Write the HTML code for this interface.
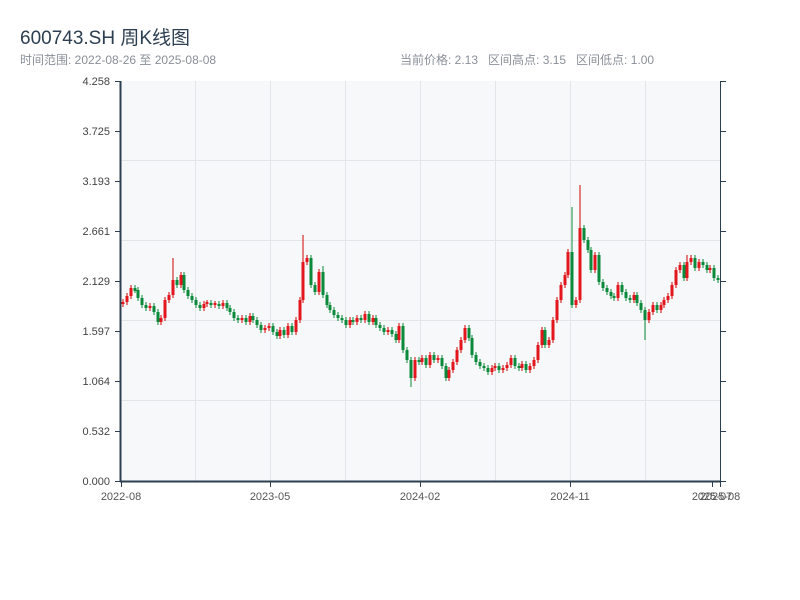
<!DOCTYPE html>
<html><head><meta charset="utf-8">
<style>
body{margin:0;width:800px;height:600px;background:#fff;overflow:hidden;font-family:"Liberation Sans","Noto Sans CJK SC",sans-serif;}
.t{position:absolute;left:20px;top:23px;font-size:19px;color:#2c3e50;}
.s{position:absolute;left:20px;top:51px;font-size:12px;color:#8a8f99;}
.r{position:absolute;left:400px;top:51px;font-size:12px;color:#8a8f99;}
svg{position:absolute;left:0;top:0;}
</style></head><body>
<div class="t">600743.SH 周K线图</div>
<div class="s">时间范围: 2022-08-26 至 2025-08-08</div>
<div class="r">当前价格: 2.13&nbsp;&nbsp; 区间高点: 3.15&nbsp;&nbsp; 区间低点: 1.00</div>
<svg width="800" height="600" xmlns="http://www.w3.org/2000/svg" font-family="Liberation Sans, sans-serif" font-size="11">
<rect x="121" y="81" width="599" height="400" fill="#f6f8fa"/>
<g stroke="#e2e5ea" stroke-width="1">
<line x1="195.5" y1="81" x2="195.5" y2="481"/><line x1="270.5" y1="81" x2="270.5" y2="481"/>
<line x1="345.5" y1="81" x2="345.5" y2="481"/><line x1="420.5" y1="81" x2="420.5" y2="481"/>
<line x1="495.5" y1="81" x2="495.5" y2="481"/><line x1="570.5" y1="81" x2="570.5" y2="481"/>
<line x1="645.5" y1="81" x2="645.5" y2="481"/>
<line x1="121" y1="160.5" x2="720" y2="160.5"/><line x1="121" y1="240.5" x2="720" y2="240.5"/>
<line x1="121" y1="320.5" x2="720" y2="320.5"/><line x1="121" y1="400.5" x2="720" y2="400.5"/>
</g>
<path fill="none" stroke="#d40000" stroke-width="1" d="M123 299V307M127 293V305M131 285V299M150 303V311M161 315V325M165 297V321M169 292V303M173 258V298M181 272V288M204 301V311M207 300V307M215 301V308M223 300V309M242 315V323M250 313V325M265 325V333M269 323V331M280 327V339M288 323V338M296 317V335M300 297V323M303 235V303M307 255V265M319 269V295M350 317V328M357 315V325M365 311V323M373 315V325M388 327V335M399 323V343M415 357V381M422 355V365M430 352V368M438 355V363M449 367V381M453 359V373M457 347V365M461 337V353M465 325V343M492 365V375M495 363V371M503 365V373M507 362V371M511 355V368M522 361V371M530 363V373M534 357V369M538 342V363M542 327V348M549 337V348M553 317V343M557 297V323M561 282V303M565 272V288M568 249V278M576 297V308M580 185V303M595 252V273M618 282V301M634 292V303M649 309V323M653 302V315M661 302V313M664 297V308M668 293V303M672 282V299M676 267V288M680 262V273M687 255V281M691 255V265M699 259V271M710 265V273"/>
<path fill="none" stroke="#e3161d" stroke-width="3" d="M123 304V302M127 302V296M131 296V288M150 308V306M161 322V318M165 318V300M169 300V295M173 295V280M181 285V275M204 308V304M207 304V302M215 305V303M223 306V303M242 320V318M250 322V316M265 330V328M269 328V326M280 336V330M288 335V326M296 332V320M300 320V300M303 300V262M307 262V258M319 292V272M350 325V320M357 322V318M365 320V314M373 322V318M388 332V330M399 340V326M415 378V360M422 362V358M430 365V355M438 360V358M449 378V370M453 370V362M457 362V350M461 350V340M465 340V328M492 372V368M495 368V366M503 370V368M507 368V365M511 365V358M522 368V364M530 370V366M534 366V360M538 360V345M542 345V330M549 345V340M553 340V320M557 320V300M561 300V285M565 285V275M568 275V252M576 305V300M580 300V228M595 270V255M618 298V285M634 300V295M649 320V312M653 312V305M661 310V305M664 305V300M668 300V296M672 296V285M676 285V270M680 270V265M687 278V262M691 262V258M699 268V262M710 270V268"/>
<path fill="none" stroke="#0a8a3a" stroke-width="1" d="M135 285V293M138 287V301M142 295V308M146 302V311M154 303V315M158 309V325M177 277V288M184 272V293M188 287V299M192 293V303M196 297V308M200 302V311M211 300V308M219 301V309M227 300V311M230 305V315M234 309V321M238 315V323M246 315V325M253 313V323M257 317V328M261 322V333M273 323V335M277 329V339M284 327V338M292 323V335M311 255V288M315 282V295M323 266V298M327 292V308M330 302V313M334 307V318M338 312V321M342 315V323M346 317V328M353 317V325M361 315V323M369 311V325M376 315V328M380 322V331M384 325V335M392 327V337M396 331V343M403 323V353M407 347V363M411 357V387M419 357V365M426 355V368M434 352V363M442 355V369M446 363V381M469 325V341M472 335V358M476 352V365M480 359V369M484 363V371M488 365V375M499 363V373M515 355V369M519 363V371M526 361V373M545 327V348M572 207V308M584 225V243M588 237V253M591 247V273M599 252V285M603 279V291M607 285V295M611 289V299M614 293V301M622 282V295M626 289V301M630 295V303M637 292V306M641 300V313M645 307V340M657 302V313M684 262V281M695 255V271M703 259V268M707 262V273M714 265V281M718 275V283"/>
<path fill="none" stroke="#0a8a3a" stroke-width="3" d="M135 288V291M138 290V298M142 298V305M146 305V308M154 306V312M158 312V322M177 280V285M184 275V290M188 290V296M192 296V300M196 300V305M200 305V308M211 303V305M219 304V306M227 303V308M230 308V312M234 312V318M238 318V320M246 318V322M253 316V320M257 320V325M261 325V330M273 326V332M277 332V336M284 330V335M292 326V332M311 258V285M315 285V292M323 272V295M327 295V305M330 305V310M334 310V315M338 315V318M342 318V320M346 320V325M353 320V322M361 318V320M369 314V322M376 318V325M380 325V328M384 328V332M392 330V334M396 334V340M403 326V350M407 350V360M411 360V378M419 360V362M426 358V365M434 355V360M442 358V366M446 366V378M469 328V338M472 338V355M476 355V362M480 362V366M484 366V368M488 368V372M499 366V370M515 358V366M519 366V368M526 364V370M545 330V345M572 252V305M584 228V240M588 240V250M591 250V270M599 255V282M603 282V288M607 288V292M611 292V296M614 296V298M622 285V292M626 292V298M630 298V300M637 295V303M641 303V310M645 310V320M657 305V310M684 265V278M695 258V268M703 262V265M707 265V270M714 268V278M718 278V280"/>
<g stroke="#2c3e50" stroke-width="1">
<line x1="120.5" y1="81" x2="120.5" y2="482" stroke-width="2"/>
<line x1="720.5" y1="81" x2="720.5" y2="482"/>
<line x1="120" y1="481.5" x2="721" y2="481.5" stroke-width="2"/>
<line x1="115" y1="81.5" x2="120" y2="81.5"/><line x1="115" y1="131.5" x2="120" y2="131.5"/>
<line x1="115" y1="181.5" x2="120" y2="181.5"/><line x1="115" y1="231.5" x2="120" y2="231.5"/>
<line x1="115" y1="281.5" x2="120" y2="281.5"/><line x1="115" y1="331.5" x2="120" y2="331.5"/>
<line x1="115" y1="381.5" x2="120" y2="381.5"/><line x1="115" y1="431.5" x2="120" y2="431.5"/>
<line x1="115" y1="481.5" x2="120" y2="481.5"/>
<line x1="721" y1="81.5" x2="726" y2="81.5"/><line x1="721" y1="131.5" x2="726" y2="131.5"/>
<line x1="721" y1="181.5" x2="726" y2="181.5"/><line x1="721" y1="231.5" x2="726" y2="231.5"/>
<line x1="721" y1="281.5" x2="726" y2="281.5"/><line x1="721" y1="331.5" x2="726" y2="331.5"/>
<line x1="721" y1="381.5" x2="726" y2="381.5"/><line x1="721" y1="431.5" x2="726" y2="431.5"/>
<line x1="721" y1="481.5" x2="726" y2="481.5"/>
<line x1="121.5" y1="482" x2="121.5" y2="487"/><line x1="270.5" y1="482" x2="270.5" y2="487"/>
<line x1="420.5" y1="482" x2="420.5" y2="487"/><line x1="570.5" y1="482" x2="570.5" y2="487"/>
<line x1="712.5" y1="482" x2="712.5" y2="487"/><line x1="720.5" y1="482" x2="720.5" y2="487"/>
</g>
<g fill="#444" text-anchor="end">
<text x="110" y="85">4.258</text><text x="110" y="135">3.725</text><text x="110" y="185">3.193</text>
<text x="110" y="235">2.661</text><text x="110" y="285">2.129</text><text x="110" y="335">1.597</text>
<text x="110" y="385">1.064</text><text x="110" y="435">0.532</text><text x="110" y="485">0.000</text>
</g>
<g fill="#555" text-anchor="middle">
<text x="121" y="500">2022-08</text><text x="270" y="500">2023-05</text><text x="420" y="500">2024-02</text>
<text x="570" y="500">2024-11</text><text x="712" y="500">2025-07</text><text x="720" y="500">2025-08</text>
</g>
</svg>
</body></html>
